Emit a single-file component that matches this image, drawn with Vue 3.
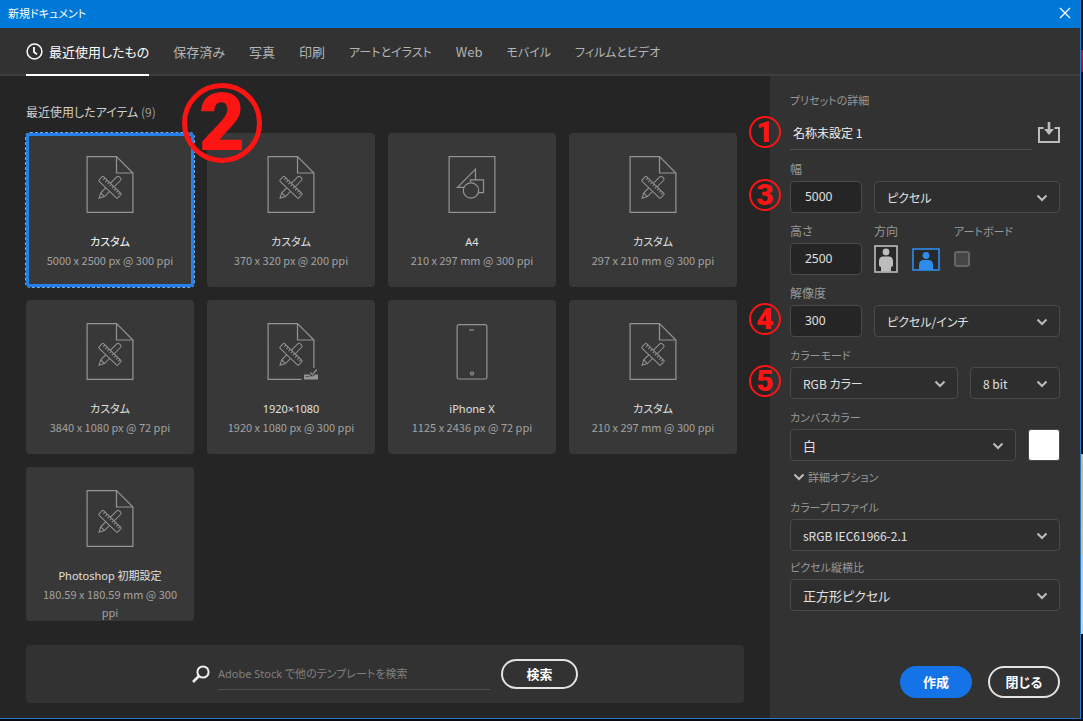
<script setup>
import { ref } from 'vue'

const tabs = [
  { text: '保存済み' },
  { text: '写真' },
  { text: '印刷' },
  { text: 'アートとイラスト', kana: true },
  { text: 'Web' },
  { text: 'モバイル', kana: true },
  { text: 'フィルムとビデオ', kana: true }
]

const presets = [
  { title: 'カスタム', detail: '5000 x 2500 px @ 300 ppi', icon: 'page' },
  { title: 'カスタム', detail: '370 x 320 px @ 200 ppi', icon: 'page' },
  { title: 'A4', detail: '210 x 297 mm @ 300 ppi', icon: 'art' },
  { title: 'カスタム', detail: '297 x 210 mm @ 300 ppi', icon: 'page' },
  { title: 'カスタム', detail: '3840 x 1080 px @ 72 ppi', icon: 'page' },
  { title: '1920×1080', detail: '1920 x 1080 px @ 300 ppi', icon: 'saved' },
  { title: 'iPhone X', detail: '1125 x 2436 px @ 72 ppi', icon: 'phone' },
  { title: 'カスタム', detail: '210 x 297 mm @ 300 ppi', icon: 'page' },
  { title: 'Photoshop 初期設定', detail: '180.59 x 180.59 mm @ 300 ppi', icon: 'page' }
]

const selected = ref(0)
const name = ref('名称未設定 1')
const width = ref('5000')
const height = ref('2500')
const resolution = ref('300')
const landscape = ref(true)
const artboard = ref(false)
const query = ref('')
</script>

<template>
  <div class="desktop">
    <div class="window">
      <header class="titlebar">
        <span>新規ドキュメント</span>
        <button class="close" type="button" aria-label="閉じる">
          <svg width="12" height="12" viewBox="0 0 12 12"><path d="M1 1l10 10M11 1L1 11" stroke="#fff" stroke-width="1.3" /></svg>
        </button>
      </header>

      <nav class="tabs">
        <button type="button" class="tab active">
          <svg width="17" height="17" viewBox="0 0 17 17" fill="none" stroke="currentColor">
            <circle cx="8.5" cy="8.5" r="7.4" stroke-width="1.5" />
            <path d="M8 4v5l3 2.4" stroke-width="1.8" />
          </svg>
          <span>最近使用したもの</span>
        </button>
        <button v-for="t in tabs" :key="t.text" type="button" class="tab" :class="{ kana: t.kana }">{{ t.text }}</button>
      </nav>

      <div class="body">
        <main class="main">
          <h1 class="heading">最近使用したアイテム <span>(9)</span></h1>
          <div class="grid">
            <button
              v-for="(p, i) in presets"
              :key="i"
              type="button"
              class="card"
              :class="{ selected: selected === i }"
              @click="selected = i"
            >
              <svg class="art" width="54" height="57" viewBox="-3.5 0 54 57" fill="none" stroke="#949494" stroke-width="1.2">
                <template v-if="p.icon === 'page' || p.icon === 'saved'">
                  <path v-if="p.icon === 'page'" d="M.6.6H30L46.4 17v39.4H.6z" />
                  <path v-else d="M46.4 45V17L30 .6H.6v55.8H34" />
                  <path d="M30 .6V17h16.4" />
                  <g transform="translate(23.5 31.3) rotate(-45)" stroke-width="1">
                    <path d="M-15.5 0L-10.5-2.6H12.2Q14-2.6 14-.8V.8Q14 2.6 12.2 2.6H-10.5zM-10.5-2.6V2.6" />
                  </g>
                  <g transform="translate(23.5 31.3) rotate(44)" stroke-width="1">
                    <rect x="-13" y="-3.2" width="26" height="6.4" rx="1" fill="#383838" />
                    <path d="M-10-3v2.5M-7-3v2.5M-4-3v2.5M-1-3v2.5M2-3v2.5M5-3v2.5M8-3v2.5M10.8-3v2.5" />
                  </g>
                  <g v-if="p.icon === 'saved'" stroke="none" fill="#949494">
                    <path d="M36.500 51.500h5.200l2.600 2.200 3.800-2.200h3.400v5h-15z" />
                    <path d="M42.800 49.400l2.100 2.400 4.300-5.300" fill="none" stroke="#949494" stroke-width="1.2" />
                    <path d="M38 53.500h4" stroke="#383838" stroke-width=".7" />
                  </g>
                </template>
                <template v-else-if="p.icon === 'art'">
                  <rect x=".6" y=".6" width="45.8" height="55.8" />
                  <path d="M15.5 31.3H9L27 13.2v10.6" />
                  <path d="M22 26v-2.2h13v12.8h-5" />
                  <circle cx="22.5" cy="34.5" r="7.7" />
                </template>
                <template v-else>
                  <rect x="8.6" y="1.6" width="29.8" height="54.4" rx="1.8" />
                  <path d="M20.5 7h5" />
                  <circle cx="23.5" cy="50.6" r="1.5" />
                </template>
              </svg>
              <span class="card-title">{{ p.title }}</span>
              <span class="card-detail">{{ p.detail }}</span>
            </button>
            <span class="badge big">2</span>
          </div>

          <form class="stock" @submit.prevent>
            <svg width="18" height="18" viewBox="0 0 18 18" fill="none" stroke="#f0f0f0">
              <circle cx="11" cy="7" r="5.6" stroke-width="2" />
              <path d="M7 11L1 17" stroke-width="2.6" />
            </svg>
            <input v-model="query" type="text" aria-label="Adobe Stock で他のテンプレートを検索" placeholder="Adobe Stock で他のテンプレートを検索" />
            <button class="pill outline search" type="submit">検索</button>
          </form>
        </main>

        <aside class="panel">
          <label class="label kana" for="name">プリセットの詳細</label>
          <div class="name-row">
            <span class="badge">1</span>
            <input id="name" v-model="name" type="text" />
            <button class="save" type="button" aria-label="プリセットを保存">
              <svg width="22" height="22" viewBox="0 0 22 22" fill="none" stroke="#bdbdbd">
                <path d="M5.5 6H1v14h20V6h-4.500" stroke-width="2" />
                <path d="M11 0v9" stroke-width="2.6" />
                <path d="M6 7h10l-5 6z" fill="#bdbdbd" stroke="none" />
              </svg>
            </button>
          </div>

          <div class="fields">
            <div class="field">
              <label class="label" for="width">幅</label>
              <div class="row">
                <span class="badge">3</span>
                <input id="width" v-model="width" class="box" type="text" />
                <div class="select">
                  <select aria-label="単位"><option>ピクセル</option></select>
                  <svg class="chevron" viewBox="0 0 12 8"><path d="M1.500 1.500L6 6l4.500-4.500" /></svg>
                </div>
              </div>
            </div>

            <div class="field orient">
              <div>
                <label class="label" for="height">高さ</label>
                <input id="height" v-model="height" class="box" type="text" />
              </div>
              <div class="direction">
                <span class="label">方向</span>
                <div class="row">
                  <button type="button" aria-label="縦" :class="{ on: !landscape }" @click="landscape = false">
                    <svg width="24" height="28" viewBox="0 0 24 28">
                      <rect x="1" y="1" width="22" height="26" fill="#292929" stroke="currentColor" stroke-width="1.600" />
                      <circle cx="12" cy="7" r="3.400" fill="currentColor" />
                      <path d="M8.500 11.500h7Q19 12 19 16v4q0 2-2 2v4.500H7V22q-2 0-2-2v-4q0-4 3.500-4.500z" fill="currentColor" />
                    </svg>
                  </button>
                  <button type="button" aria-label="横" :class="{ on: landscape }" @click="landscape = true">
                    <svg width="28" height="23" viewBox="0 0 28 23">
                      <rect x="1" y="1" width="26" height="21" fill="#292929" stroke="currentColor" stroke-width="1.600" />
                      <circle cx="14" cy="7.500" r="3.400" fill="currentColor" />
                      <path d="M7 22v-5q0-4.500 4-5h6q4 .5 4 5v5z" fill="currentColor" />
                    </svg>
                  </button>
                </div>
              </div>
              <div>
                <label class="label kana" for="artboard">アートボード</label>
                <div class="row"><input id="artboard" v-model="artboard" class="check" type="checkbox" /></div>
              </div>
            </div>

            <div class="field">
              <label class="label" for="resolution">解像度</label>
              <div class="row">
                <span class="badge">4</span>
                <input id="resolution" v-model="resolution" class="box" type="text" />
                <div class="select">
                  <select aria-label="解像度の単位"><option>ピクセル/インチ</option></select>
                  <svg class="chevron" viewBox="0 0 12 8"><path d="M1.500 1.500L6 6l4.500-4.500" /></svg>
                </div>
              </div>
            </div>

            <div class="field">
              <label class="label kana" for="mode">カラーモード</label>
              <div class="row">
                <span class="badge">5</span>
                <div class="select">
                  <select id="mode"><option>RGB カラー</option></select>
                  <svg class="chevron" viewBox="0 0 12 8"><path d="M1.500 1.500L6 6l4.500-4.500" /></svg>
                </div>
                <div class="select depth">
                  <select aria-label="ビット数"><option>8 bit</option></select>
                  <svg class="chevron" viewBox="0 0 12 8"><path d="M1.500 1.500L6 6l4.500-4.500" /></svg>
                </div>
              </div>
            </div>

            <div class="field">
              <label class="label kana" for="canvas">カンバスカラー</label>
              <div class="row">
                <div class="select kanji">
                  <select id="canvas"><option>白</option></select>
                  <svg class="chevron" viewBox="0 0 12 8"><path d="M1.500 1.500L6 6l4.500-4.500" /></svg>
                </div>
                <button class="swatch" type="button" aria-label="カンバスカラーを選択"></button>
              </div>
            </div>
          </div>

          <button class="advanced" type="button">
            <svg class="arrow" viewBox="0 0 12 8"><path d="M1.500 1.500L6 6l4.500-4.500" /></svg>
            <span>詳細オプション</span>
          </button>

          <div class="fields tight">
            <div class="field">
              <label class="label kana" for="profile">カラープロファイル</label>
              <div class="select">
                <select id="profile"><option>sRGB IEC61966-2.1</option></select>
                <svg class="chevron" viewBox="0 0 12 8"><path d="M1.500 1.500L6 6l4.500-4.500" /></svg>
              </div>
            </div>
            <div class="field">
              <label class="label kana" for="aspect">ピクセル縦横比</label>
              <div class="select kanji">
                <select id="aspect"><option>正方形ピクセル</option></select>
                <svg class="chevron" viewBox="0 0 12 8"><path d="M1.500 1.500L6 6l4.500-4.500" /></svg>
              </div>
            </div>
          </div>

          <div class="actions">
            <button class="pill primary" type="button">作成</button>
            <button class="pill outline" type="button">閉じる</button>
          </div>
        </aside>
      </div>
    </div>
  </div>
</template>

<style>
body {
  margin: 0;
  background: #06090f;
}
</style>

<style scoped>
.desktop {
  box-sizing: border-box;
  display: flex;
  min-height: 100vh;
  padding: 0 2px 2px 0;
  background: linear-gradient(#15181d 7%, #c01530 7%, #a01030 10%, #06090f 10%, #06090f 63%, #c9b68d 63%, #d3c49c 77%, #a9cbf0 77%, #b9d6f2 88%, #06090f 88%);
  font-family: "Noto Sans CJK JP", "Noto Sans", sans-serif;
  font-feature-settings: "palt";
  font-size: 12px;
  color: #e0e0e0;
}
.desktop * { box-sizing: border-box; }
button, input, select {
  margin: 0;
  padding: 0;
  border: 0;
  background: none;
  color: inherit;
  font: inherit;
  font-feature-settings: inherit;
  outline: none;
}
svg { display: block; flex: none; }
.window {
  flex: 1;
  display: flex;
  flex-direction: column;
  border: solid #2a78c4;
  border-width: 0 1px 1px 0;
  background: #252525;
}
.titlebar {
  display: flex;
  align-items: center;
  justify-content: space-between;
  height: 28px;
  padding: 0 9px 2px 8px;
  background: #0078d7;
  color: #fff;
  font-size: 11px;
}
.tabs {
  display: flex;
  gap: 24px;
  height: 48px;
  padding: 0 26px;
  border-bottom: 2px solid #3e3e3e;
  background: #323232;
}
.tab {
  display: flex;
  align-items: center;
  gap: 6px;
  height: 48px;
  border-bottom: 2px solid transparent;
  color: #b4b4b4;
  font-size: 13px;
  white-space: nowrap;
}
.tab.kana { font-size: 12px; }
.tab.active { color: #fff; border-color: #fff; }
.body { flex: 1; display: flex; }
.main {
  flex: 1;
  display: flex;
  flex-direction: column;
  padding: 26px 26px 15px;
}
.heading {
  margin: 0 0 11px;
  font-size: 12px;
  font-weight: 400;
  line-height: 20px;
  color: #d0d0d0;
}
.heading span { color: #a0a0a0; }
.grid {
  position: relative;
  display: grid;
  grid-template-columns: repeat(auto-fill, 168px);
  gap: 13px;
  margin-bottom: 24px;
}
.card {
  display: flex;
  flex-direction: column;
  align-items: center;
  height: 154px;
  padding: 23px 16px 0;
  border-radius: 4px;
  background: #383838;
  font-size: 11px;
  line-height: 18px;
}
.card.selected {
  outline: 1px dashed #6aa9ee;
  box-shadow: inset 0 0 0 3px #2680eb;
}
.art { margin-bottom: 20px; }
.card-title { font-family: "Noto Sans", "Noto Sans CJK JP", sans-serif; }
.card-detail { color: #a2a2a2; }
.card.selected .card-title { color: #fff; }
.stock {
  display: flex;
  align-items: center;
  justify-content: center;
  height: 58px;
  margin-top: auto;
  border-radius: 4px;
  background: #323232;
}
.stock input {
  width: 272px;
  height: 31px;
  margin: 0 11px 0 8px;
  border-bottom: 1px solid #4e4e4e;
  font-family: "Noto Sans", "Noto Sans CJK JP", sans-serif;
  font-size: 11px;
}
.stock input::placeholder { color: #808080; opacity: 1; }
.pill {
  width: 72px;
  height: 32px;
  border-radius: 16px;
  font-size: 13px;
  font-weight: 700;
  line-height: 28px;
  color: #fff;
}
.outline { border: 2px solid #e2e2e2; }
.pill.search { width: 77px; height: 30px; line-height: 26px; }
.primary { background: #1473e6; }
.panel {
  flex: 0 0 310px;
  display: flex;
  flex-direction: column;
  padding: 14px 20px 20px;
  background: #323232;
}
.label {
  display: block;
  line-height: 20px;
  color: #989898;
}
.label.kana { font-size: 11px; }
.name-row {
  position: relative;
  display: flex;
  justify-content: space-between;
  align-items: center;
  height: 34px;
  margin: 6px 0 9px;
}
.name-row input {
  width: 242px;
  height: 34px;
  padding: 0 3px;
  border-bottom: 1px solid #4e4e4e;
  color: #f0f0f0;
}
.fields { display: flex; flex-direction: column; gap: 8px; }
.tight { gap: 6px; }
.field .label { margin-bottom: 2px; }
.row {
  position: relative;
  display: flex;
  align-items: center;
  gap: 12px;
  height: 32px;
}
.box, .select {
  height: 32px;
  border: 1px solid #4a4a4a;
  border-radius: 4px;
}
.box {
  display: block;
  width: 72px;
  padding: 0 14px 2px;
  background: #252525;
  font-family: "Noto Sans", sans-serif;
}
.select {
  position: relative;
  flex: 1;
  background: #2e2e2e;
}
.tight .select { flex: none; }
.select select {
  width: 100%;
  height: 30px;
  padding: 0 30px 0 12px;
  appearance: none;
}
.select.kanji { font-size: 13px; }
.select.depth { flex: 0 0 90px; }
.chevron {
  position: absolute;
  top: 12px;
  right: 11px;
  pointer-events: none;
}
.chevron, .arrow {
  width: 12px;
  height: 8px;
  fill: none;
  stroke: #bdbdbd;
  stroke-width: 2;
}
.orient { display: flex; gap: 12px; }
.direction { width: 68px; color: #bdbdbd; }
.direction .row { gap: 14px; }
.direction .on { color: #2d8ceb; }
.check {
  width: 16px;
  height: 16px;
  appearance: none;
  border: 2px solid #666;
  border-radius: 3px;
  background: #454545;
}
.check:checked { background: #2d8ceb; }
.swatch {
  width: 32px;
  height: 32px;
  border: 1px solid #4a4a4a;
  border-radius: 3px;
  background: #fff;
}
.advanced {
  display: flex;
  align-items: center;
  gap: 3px;
  height: 16px;
  margin: 8px 0 12px 3px;
  color: #989898;
  font-size: 11px;
}
.actions {
  display: flex;
  justify-content: flex-end;
  gap: 16px;
  margin-top: auto;
}
.badge {
  position: absolute;
  left: -41px;
  bottom: 2px;
  width: 32px;
  height: 32px;
  border: 2px solid #ff1414;
  border-radius: 50%;
  color: #ff1414;
  font-family: Roboto, sans-serif;
  font-size: 30px;
  font-weight: 900;
  line-height: 28px;
  text-align: center;
  pointer-events: none;
}
.badge.big {
  left: 156px;
  top: -50px;
  width: 80px;
  height: 80px;
  border-width: 5px;
  font-size: 80px;
  line-height: 70px;
}
</style>
